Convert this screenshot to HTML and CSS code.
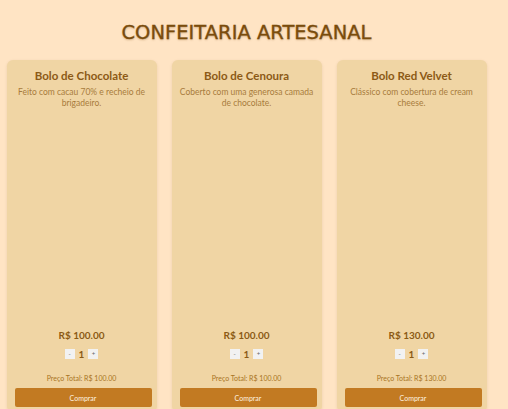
FILE: index.html
```html
<!DOCTYPE html>
<html lang="pt-BR">
<head>
<meta charset="utf-8">
<title>Confeitaria Artesanal</title>
<link rel="stylesheet" href="styles.css">
</head>
<body>
<h1 class="page-title">CONFEITARIA ARTESANAL</h1>
<main class="products">
  <article class="card">
    <h2 class="card-title">Bolo de Chocolate</h2>
    <p class="card-desc">Feito com cacau 70% e recheio de brigadeiro.</p>
    <div class="card-bottom">
      <div class="price">R$ 100.00</div>
      <div class="qty">
        <button class="qty-btn">-</button>
        <span class="qty-num">1</span>
        <button class="qty-btn">+</button>
      </div>
      <div class="total">Preço Total: R$ 100.00</div>
      <button class="buy">Comprar</button>
    </div>
  </article>
  <article class="card">
    <h2 class="card-title">Bolo de Cenoura</h2>
    <p class="card-desc">Coberto com uma generosa camada de chocolate.</p>
    <div class="card-bottom">
      <div class="price">R$ 100.00</div>
      <div class="qty">
        <button class="qty-btn">-</button>
        <span class="qty-num">1</span>
        <button class="qty-btn">+</button>
      </div>
      <div class="total">Preço Total: R$ 100.00</div>
      <button class="buy">Comprar</button>
    </div>
  </article>
  <article class="card">
    <h2 class="card-title">Bolo Red Velvet</h2>
    <p class="card-desc">Clássico com cobertura de cream cheese.</p>
    <div class="card-bottom">
      <div class="price">R$ 130.00</div>
      <div class="qty">
        <button class="qty-btn">-</button>
        <span class="qty-num">1</span>
        <button class="qty-btn">+</button>
      </div>
      <div class="total">Preço Total: R$ 130.00</div>
      <button class="buy">Comprar</button>
    </div>
  </article>
</main>
</body>
</html>
```

FILE: styles.css
```css
html, body {
  margin: 0;
  padding: 0;
  background: #ffe4c4;
  overflow: hidden;
}
body {
  font-family: Lato, "Open Sans", sans-serif;
  width: 493px;
}
.page-title {
  margin: 0;
  padding-top: 22px;
  margin-bottom: 16px;
  font-family: "DejaVu Sans", sans-serif;
  font-weight: normal;
  font-size: 19.5px;
  line-height: 22px;
  text-align: center;
  color: #7a4c0c;
  -webkit-text-stroke: 0.3px #7a4c0c;
  text-shadow: 0 1px 2px rgba(120, 70, 10, 0.35);
}
.products {
  width: 480px;
  margin: 0 auto;
  display: grid;
  grid-template-columns: repeat(3, 150px);
  column-gap: 15px;
}
.card {
  background: #f0d5a4;
  border-radius: 6px;
  box-shadow: 0 1px 3px rgba(120, 80, 20, 0.15);
  height: 352px;
  box-sizing: border-box;
  padding: 8px 8px 5px;
  display: flex;
  flex-direction: column;
  text-align: center;
}
.card-title {
  margin: 0;
  font-size: 11.5px;
  line-height: 15px;
  font-weight: 700;
  color: #8c5a16;
}
.card-desc {
  margin: 4px 0 0;
  font-size: 8.5px;
  line-height: 11px;
  color: #a87c3c;
}
.card-bottom {
  margin-top: auto;
  display: flex;
  flex-direction: column;
  align-items: center;
}
.price {
  font-size: 10px;
  line-height: 13px;
  font-weight: 700;
  color: #8b5a14;
}
.qty {
  margin-top: 7px;
  display: flex;
  align-items: center;
  gap: 3px;
  height: 10px;
}
.qty-btn {
  width: 10px;
  height: 10px;
  padding: 0;
  border: none;
  background: #f2f2f2;
  font-size: 6px;
  line-height: 10px;
  color: #666;
  font-family: inherit;
}
.qty-num {
  font-size: 10px;
  font-weight: 700;
  color: #8b5a14;
  padding: 0 1px;
}
.total {
  margin-top: 14px;
  font-size: 7px;
  line-height: 10px;
  color: #a8741f;
}
.buy {
  margin-top: 5px;
  align-self: flex-start;
  width: 137px;
  height: 19px;
  border: none;
  border-radius: 2px;
  background: #c27a22;
  color: #fff3e0;
  font-family: inherit;
  font-size: 7px;
}
```
